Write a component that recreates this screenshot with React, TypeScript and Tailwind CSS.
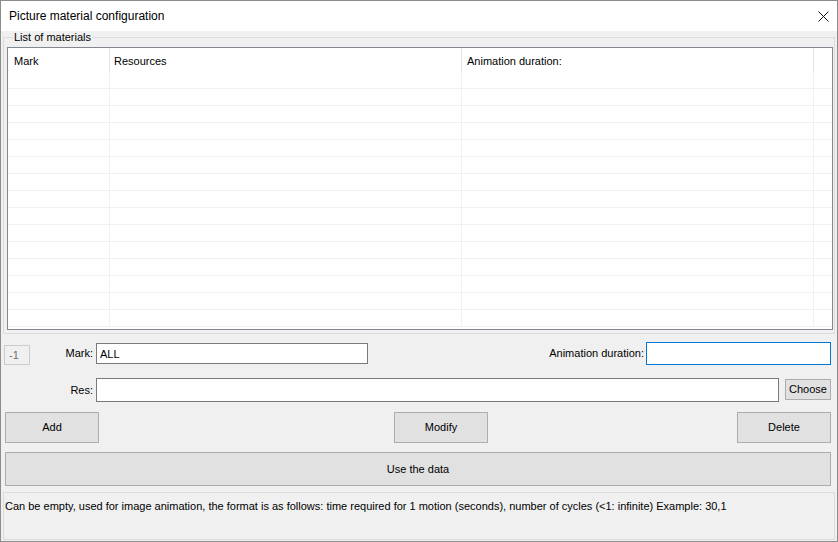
import React from "react";

const rows = Array.from({ length: 15 }, (_, i) => i);

function Btn({ label, className }: { label: string; className: string }) {
  return (
    <button
      className={
        "flex items-center justify-center border border-[#adadad] bg-[#e1e1e1] text-[11px] text-black shrink-0 " +
        className
      }
    >
      {label}
    </button>
  );
}

export default function App() {
  return (
    <div className="w-[838px] h-[542px] flex flex-col bg-[#f0f0f0] border border-[#8c8c8c] font-['Liberation_Sans',Arial,sans-serif] text-[11px] text-black overflow-hidden">
      {/* Title bar */}
      <div className="h-[30px] shrink-0 bg-white flex items-center justify-between pl-[8px] pr-[7px]">
        <span className="text-[12px] text-black">Picture material configuration</span>
        <svg width="11" height="11" viewBox="0 0 11 11" className="mr-[1px]">
          <path d="M0.5 0.5 L10.5 10.5 M10.5 0.5 L0.5 10.5" stroke="#111" strokeWidth="1" fill="none" />
        </svg>
      </div>

      {/* Group box */}
      <fieldset className="ml-[2px] mr-[2px] border border-[#dcdcdc] pl-[3px] pr-[1px] pb-[3px] pt-0 min-w-0">
        <legend className="ml-[6px] px-[1px] leading-[13px] text-[11px]">List of materials</legend>
        <div className="mt-[3px] h-[283px] border border-[#828790] bg-white overflow-hidden">
          <div className="grid grid-cols-[102px_352px_352px_1fr] h-[24px]">
            <div className="border-r border-[#e5e5e5] pl-[6px] pt-[5px]">Mark</div>
            <div className="border-r border-[#e5e5e5] pl-[4px] pt-[5px]">Resources</div>
            <div className="border-r border-[#e5e5e5] pl-[5px] pt-[5px]">Animation duration:</div>
            <div />
          </div>
          {rows.map((r) => (
            <div key={r} className="grid grid-cols-[102px_352px_352px_1fr] h-[17px] border-b border-[#f0f0f0]">
              <div className="border-r border-[#f0f0f0]" />
              <div className="border-r border-[#f0f0f0]" />
              <div className="border-r border-[#f0f0f0]" />
              <div />
            </div>
          ))}
        </div>
      </fieldset>

      {/* Row 1 */}
      <div className="mt-[8px] h-[23px] flex items-start shrink-0">
        <div className="ml-[3px] mt-[3px] w-[26px] h-[20px] border border-[#cccccc] text-[#6d6d6d] flex items-center pl-[4px] shrink-0">
          -1
        </div>
        <div className="w-[66px] h-[21px] mt-[1px] flex items-center justify-end pr-[3px] shrink-0">Mark:</div>
        <input
          defaultValue="ALL"
          className="mt-[1px] w-[272px] h-[21px] border border-[#7a7a7a] bg-white px-[3px] text-[11px] outline-none shrink-0"
        />
        <div className="flex-1 h-[23px] flex items-center justify-end pr-[2px]">Animation duration:</div>
        <input className="w-[185px] h-[23px] border border-[#0078d7] bg-white outline-none mr-[6px] shrink-0" />
      </div>

      {/* Row 2 */}
      <div className="mt-[13px] h-[24px] flex items-start shrink-0">
        <div className="w-[95px] h-[24px] flex items-center justify-end pr-[3px] shrink-0">Res:</div>
        <input className="w-[683px] h-[24px] border border-[#7a7a7a] bg-white outline-none shrink-0" />
        <Btn label="Choose" className="ml-[6px] mt-[1px] w-[46px] h-[21px]" />
      </div>

      {/* Row 3 */}
      <div className="mt-[10px] h-[31px] flex items-start shrink-0 pl-[4px]">
        <Btn label="Add" className="w-[94px] h-[31px]" />
        <Btn label="Modify" className="ml-[295px] w-[94px] h-[31px]" />
        <Btn label="Delete" className="ml-[249px] w-[94px] h-[31px]" />
      </div>

      {/* Row 4 */}
      <div className="mt-[9px] shrink-0 pl-[4px] pr-[6px]">
        <Btn label="Use the data" className="w-full h-[34px]" />
      </div>

      {/* Status */}
      <div className="mt-[6px] ml-[2px] mr-[2px] h-[48px] border border-[#dcdcdc] pl-[1px] pt-[5px] shrink-0">
        Can be empty, used for image animation, the format is as follows: time required for 1 motion (seconds), number of cycles (&lt;1: infinite) Example: 30,1
      </div>
    </div>
  );
}
